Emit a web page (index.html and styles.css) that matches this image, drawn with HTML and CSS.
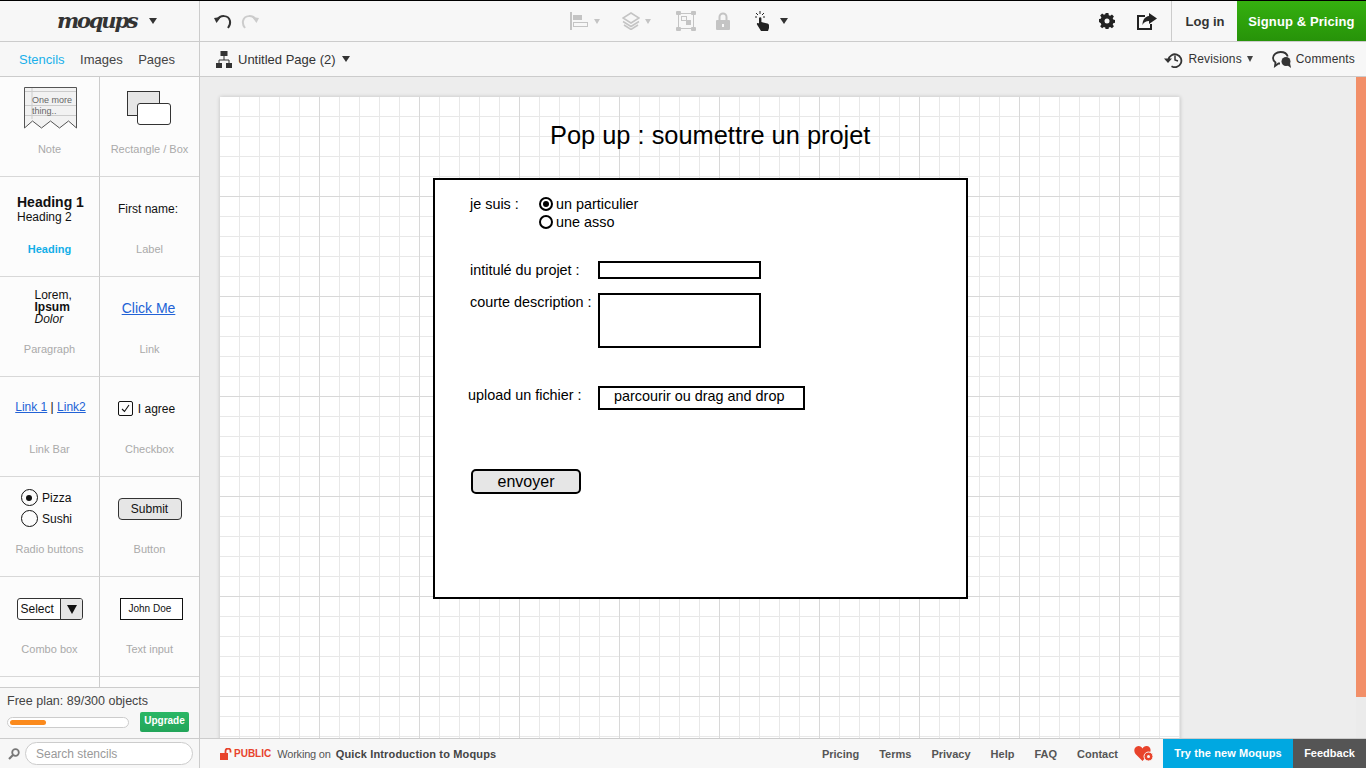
FILE: index.html
```html
<!DOCTYPE html>
<html lang="en">
<head>
  <meta charset="UTF-8" />
  <title>Moqups</title>
  <link rel="stylesheet" href="styles.css">
</head>
<body>
<header class="toolbar">
  <div class="logo-cell">
    <span class="logo">moqups</span>
    <span class="caret dark"></span>
  </div>
  <div class="tools">
    <div class="history">
      <svg width="18" height="18" viewBox="0 0 18 18"><path d="M3.500 7.500C6 3 14.500 2.500 16 9c.5 2.500-.5 5-2 7" fill="none" stroke="#333" stroke-width="2"/><path d="M0 6l7-1-4.500 6z" fill="#333"/></svg>
      <svg width="18" height="18" viewBox="0 0 18 18"><path d="M14.500 7.500C12 3 3.500 2.500 2 9c-.5 2.500.5 5 2 7" fill="none" stroke="#ccc" stroke-width="2"/><path d="M18 6l-7-1 4.500 6z" fill="#ccc"/></svg>
    </div>
    <div class="middle-tools">
      <div class="tool align">
        <svg width="19" height="18" viewBox="0 0 19 18"><path d="M1 0v18" stroke="#c4c4c4" stroke-width="2"/><rect x="3" y="3" width="9" height="5" fill="#c4c4c4"/><rect x="3.500" y="10.500" width="14" height="4" fill="none" stroke="#c4c4c4"/></svg>
        <span class="caret light"></span>
      </div>
      <div class="tool layers">
        <svg width="18" height="18" viewBox="0 0 18 18"><path d="M9 1l8 5-8 5-8-5z" fill="none" stroke="#c4c4c4" stroke-width="1.500"/><path d="M1 9.500l8 5 8-5M2 13l7 4.500 7-4.500" fill="none" stroke="#c4c4c4" stroke-width="1.500"/></svg>
        <span class="caret light"></span>
      </div>
      <div class="tool frame">
        <svg width="20" height="20" viewBox="0 0 20 20"><rect x="2.500" y="2.500" width="15" height="15" fill="none" stroke="#c4c4c4"/><g fill="#c4c4c4"><rect x="0" y="0" width="5" height="4" rx="1"/><rect x="15" y="0" width="5" height="4" rx="1"/><rect x="0" y="16" width="5" height="4" rx="1"/><rect x="15" y="16" width="5" height="4" rx="1"/><rect x="10" y="9" width="5" height="5"/></g><rect x="5.500" y="5.500" width="5" height="4" fill="none" stroke="#c4c4c4"/></svg>
      </div>
      <div class="tool lock">
        <svg width="14" height="18" viewBox="0 0 14 18"><path d="M3.500 8V5a3.500 3.500 0 0 1 7 0v3" fill="none" stroke="#c4c4c4" stroke-width="2"/><rect x="0" y="8" width="14" height="10" rx="1" fill="#c4c4c4"/><rect x="6" y="12" width="2" height="3" fill="#f7f7f7"/></svg>
      </div>
      <div class="tool pointer">
        <svg width="16" height="20" viewBox="0 0 16 20"><path d="M4 7.500a1.200 1.200 0 0 1 2.400 0V11l6 1.500c1 .3 1.600 1 1.600 2V17l-1 3H6l-4-6.500c-.6-1.200.8-2 1.700-1.200L4 13z" fill="#222"/><path d="M5 0v3M1 2l2 2M9 2L7 4M0 6h2M8 6h2" stroke="#222" fill="none"/></svg>
        <span class="caret dark"></span>
      </div>
    </div>
    <div class="side-tools">
      <svg width="16" height="16" viewBox="0 0 16 16"><path d="M6.500 0h3l.4 2.300 1.500.6L13.300 1.600l2.100 2.100-1.300 1.900.6 1.500 2.300.4v3l-2.300.4-.6 1.500 1.300 1.900-2.100 2.100-1.900-1.300-1.500.6-.4 2.300h-3l-.4-2.300-1.500-.6-1.900 1.300-2.100-2.100 1.300-1.900-.6-1.500L-1 9.500v-3l2.300-.4.6-1.500L.6 2.700 2.700.6l1.900 1.300 1.500-.6z" fill="#222" transform="translate(.6 0) scale(.93)"/><circle cx="8" cy="8" r="2.500" fill="#f7f7f7"/></svg>
      <svg width="20" height="17" viewBox="0 0 20 17"><path d="M8 3H1v13h13v-5" fill="none" stroke="#222" stroke-width="2"/><path d="M12 0l8 5.500-8 5.500V8C9 8 7 9 5.500 12 5.500 7 8 3.500 12 3z" fill="#222"/></svg>
    </div>
    <a class="login">Log in</a>
    <a class="signup">Signup &amp; Pricing</a>
  </div>
</header>

<nav class="subbar">
  <div class="tabs">
    <span class="tab active">Stencils</span>
    <span class="tab">Images</span>
    <span class="tab">Pages</span>
  </div>
  <div class="page-bar">
    <div class="page-name">
      <svg width="16" height="17" viewBox="0 0 16 17"><g fill="#333"><rect x="4.500" y="0" width="7" height="5"/><rect x="0" y="12" width="6" height="5"/><rect x="10" y="12" width="6" height="5"/></g><path d="M8 5v4M3 12V9h10v3" fill="none" stroke="#333"/></svg>
      <span>Untitled Page (2)</span>
      <span class="caret dark"></span>
    </div>
    <div class="page-actions">
      <svg class="revisions-icon" width="19" height="17" viewBox="0 0 19 17"><path d="M4.500 8.500a6.500 6.500 0 1 1 3 6.800" fill="none" stroke="#333" stroke-width="1.800"/><path d="M0 7.500h8l-4 4.500z" fill="#333"/><path d="M11 4.500V9l3 1" fill="none" stroke="#333" stroke-width="1.500"/></svg>
      <span>Revisions</span>
      <span class="caret small"></span>
      <svg class="comments-icon" width="20" height="17" viewBox="0 0 20 17"><path d="M8 12.500H6.500L3 15l.5-3.500C1.500 10 1 8.500 1 7c0-3.500 3.500-6 7.500-6 3.500 0 6.500 1.800 7.200 4.500" fill="none" stroke="#333" stroke-width="1.800"/><circle cx="14" cy="10.500" r="4.500" fill="#333"/><path d="M15 14l4 3-1-5z" fill="#333"/></svg>
      <span>Comments</span>
    </div>
  </div>
</nav>

<div class="workspace">
  <aside class="sidebar">
    <div class="stencils">
      <div class="stencil">
        <div class="preview">
          <div class="note-icon">
            <svg width="53" height="42" viewBox="0 0 53 42"><path d="M.5 41V.5h52V41l-8-7-9 7-9-7-9 7-9-7z" fill="#f2f2f2" stroke="#555"/><path d="M1 4.500h51M1 18.500h51M1 28.500h51M8 1v31" stroke="#ccc" fill="none"/></svg>
            <span class="note-text">One more thing..</span>
          </div>
        </div>
        <span class="stencil-name">Note</span>
      </div>
      <div class="stencil">
        <div class="preview">
          <div class="rect-icon"><div class="rect-back"></div><div class="rect-front"></div></div>
        </div>
        <span class="stencil-name">Rectangle / Box</span>
      </div>
      <div class="stencil">
        <div class="preview">
          <div class="headings">
            <div class="h1">Heading 1</div>
            <div class="h2">Heading 2</div>
          </div>
        </div>
        <span class="stencil-name selected">Heading</span>
      </div>
      <div class="stencil">
        <div class="preview"><span class="sample first-name">First name:</span></div>
        <span class="stencil-name">Label</span>
      </div>
      <div class="stencil">
        <div class="preview">
          <div class="paragraph"><div>Lorem,</div><b>Ipsum</b><div><i>Dolor</i></div></div>
        </div>
        <span class="stencil-name">Paragraph</span>
      </div>
      <div class="stencil">
        <div class="preview"><a class="click-me">Click Me</a></div>
        <span class="stencil-name">Link</span>
      </div>
      <div class="stencil">
        <div class="preview"><div class="sample link-bar"><a>Link 1</a> | <a>Link2</a></div></div>
        <span class="stencil-name">Link Bar</span>
      </div>
      <div class="stencil">
        <div class="preview">
          <div class="check-row">
            <span class="check-box"><svg width="11" height="11" viewBox="0 0 11 11"><path d="M2 6l2.500 2.500L9 2" fill="none" stroke="#111" stroke-width="1.100"/></svg></span>
            <span class="sample">I agree</span>
          </div>
        </div>
        <span class="stencil-name">Checkbox</span>
      </div>
      <div class="stencil">
        <div class="preview">
          <div class="radios">
            <div class="radio-row"><span class="radio on"></span><span class="sample">Pizza</span></div>
            <div class="radio-row"><span class="radio"></span><span class="sample">Sushi</span></div>
          </div>
        </div>
        <span class="stencil-name">Radio buttons</span>
      </div>
      <div class="stencil">
        <div class="preview"><div class="submit">Submit</div></div>
        <span class="stencil-name">Button</span>
      </div>
      <div class="stencil">
        <div class="preview">
          <div class="combo"><span class="combo-value">Select</span><span class="combo-arrow"></span></div>
        </div>
        <span class="stencil-name">Combo box</span>
      </div>
      <div class="stencil">
        <div class="preview"><div class="text-input">John Doe</div></div>
        <span class="stencil-name">Text input</span>
      </div>
      <div class="stencil cut"></div>
      <div class="stencil cut"></div>
    </div>
    <div class="plan">
      <div class="plan-text">Free plan: 89/300 objects</div>
      <div class="plan-row">
        <div class="progress"><div class="progress-fill"></div></div>
        <a class="upgrade">Upgrade</a>
      </div>
    </div>
    <div class="search">
      <svg width="12" height="12" viewBox="0 0 12 12"><circle cx="7.500" cy="4.500" r="3.300" fill="none" stroke="#777" stroke-width="1.800"/><path d="M5 7l-4 4" stroke="#777" stroke-width="2.200"/></svg>
      <div class="search-box">Search stencils</div>
    </div>
  </aside>

  <div class="right-column">
    <div class="canvas-row">
      <main class="canvas">
        <div class="page">
          <div class="shape title">Pop up : soumettre un projet</div>
          <div class="shape frame-box"></div>
          <div class="shape lbl lbl-suis">je suis :</div>
          <div class="shape radio-opt opt-one"><span class="mock-radio on"></span>un particulier</div>
          <div class="shape radio-opt opt-two"><span class="mock-radio"></span>une asso</div>
          <div class="shape lbl lbl-title">intitulé du projet :</div>
          <div class="shape field field-title"></div>
          <div class="shape lbl lbl-desc">courte description :</div>
          <div class="shape field field-desc"></div>
          <div class="shape lbl lbl-upload">upload un fichier :</div>
          <div class="shape field field-upload">parcourir ou drag and drop</div>
          <div class="shape send">envoyer</div>
        </div>
      </main>
      <div class="scrollbar"><div class="scroll-thumb"></div></div>
    </div>

    <footer class="footer">
      <div class="status">
        <svg width="14" height="12" viewBox="0 0 14 12"><rect x="0" y="5" width="8" height="7" fill="#e8432b"/><path d="M5.500 5V3a2.500 2.500 0 0 1 5 0v1.500" fill="none" stroke="#e8432b" stroke-width="1.800"/></svg>
        <span class="public">PUBLIC</span>
        <span class="working">Working on</span>
        <b>Quick Introduction to Moqups</b>
      </div>
      <div class="footer-links">
        <a>Pricing</a>
        <a>Terms</a>
        <a>Privacy</a>
        <a>Help</a>
        <a>FAQ</a>
        <a>Contact</a>
        <svg class="heart" width="20" height="17" viewBox="0 0 20 17"><path d="M8.500 16L1.500 9C-1 6 .5 1 4.500 1c2 0 3.200 1 4 2.500C9.300 2 10.500 1 12.500 1c3.500 0 5 3.500 3.500 6.500z" fill="#e8432b"/><circle cx="14.500" cy="11.500" r="4.500" fill="#e8432b" stroke="#f7f7f7"/><circle cx="14.500" cy="11.500" r="1.500" fill="#f7f7f7"/></svg>
      </div>
      <a class="try-new">Try the new Moqups</a>
      <a class="feedback">Feedback</a>
    </footer>
  </div>
</div>
</body>
</html>
```

FILE: styles.css
```css
* {
  box-sizing: border-box;
}
html, body {
  height: 100%;
}
body {
  margin: 0;
  width: 1366px;
  height: 768px;
  overflow: hidden;
  display: flex;
  flex-direction: column;
  font-family: 'Liberation Sans', Arial, sans-serif;
  color: #333;
  background: #f7f7f7;
}
svg {
  display: block;
  flex: none;
}

/* carets */
.caret {
  display: block;
  width: 0;
  height: 0;
  border-left: 4px solid transparent;
  border-right: 4px solid transparent;
  border-top: 6px solid #333;
}
.caret.light {
  border-left-width: 3.500px;
  border-right-width: 3.500px;
  border-top: 5px solid #c4c4c4;
}
.caret.small {
  border-left-width: 3.500px;
  border-right-width: 3.500px;
  border-top: 6px solid #444;
}

/* top toolbar */
.toolbar {
  flex: none;
  height: 42px;
  display: flex;
  border-top: 1px solid #000;
  border-bottom: 1px solid #ccc;
  background: #f7f7f7;
}
.logo-cell {
  flex: none;
  width: 200px;
  padding-left: 57px;
  border-right: 1px solid #ccc;
  display: flex;
  align-items: center;
  gap: 11px;
}
.logo {
  width: 81px;
  font-family: 'DejaVu Serif', serif;
  font-size: 21px;
  font-weight: bold;
  font-style: italic;
  letter-spacing: -2.200px;
  line-height: 22px;
  color: #333;
}
.tools {
  flex: 1;
  display: flex;
  align-items: center;
}
.history {
  display: flex;
  gap: 9px;
  margin-left: 14px;
}
.middle-tools {
  display: flex;
  align-items: center;
  margin-left: 311px;
}
.tool {
  display: flex;
  align-items: center;
  gap: 5px;
}
.align {
  width: 52px;
}
.layers {
  width: 54px;
}
.frame {
  width: 40px;
}
.lock {
  width: 39px;
}
.pointer {
  gap: 9px;
}
.side-tools {
  display: flex;
  align-items: center;
  gap: 22px;
  margin-left: 311px;
  width: 73px;
  height: 100%;
  border-right: 1px solid #ccc;
}
.login {
  width: 65px;
  padding-left: 1px;
  text-align: center;
  font-size: 13px;
  font-weight: bold;
  color: #333;
}
.signup {
  width: 129px;
  height: 100%;
  display: flex;
  align-items: center;
  justify-content: center;
  font-size: 13px;
  font-weight: bold;
  letter-spacing: .1px;
  color: #fff;
  background: linear-gradient(#35b00f, #279309);
}

/* second bar */
.subbar {
  flex: none;
  height: 35px;
  display: flex;
  border-bottom: 1px solid #ccc;
  background: #f7f7f7;
}
.tabs {
  flex: none;
  width: 200px;
  border-right: 1px solid #ccc;
  padding-left: 19px;
  display: flex;
  align-items: center;
  gap: 15.500px;
  font-size: 13px;
}
.tab {
  color: #444;
}
.tab.active {
  color: #1ab0ea;
}
.page-bar {
  flex: 1;
  display: flex;
  align-items: center;
  justify-content: space-between;
  padding: 0 11px 0 16px;
}
.page-name {
  display: flex;
  align-items: center;
  gap: 6px;
  font-size: 13px;
}
.page-actions {
  display: flex;
  align-items: center;
  font-size: 12px;
  letter-spacing: .15px;
}
.revisions-icon {
  margin-right: 5px;
}
.page-actions .caret {
  margin: 0 19px 0 5px;
}
.comments-icon {
  margin-right: 4px;
}

/* main area */
.workspace {
  flex: 1;
  min-height: 0;
  display: flex;
}
.sidebar {
  width: 200px;
  flex: none;
  display: flex;
  flex-direction: column;
  border-right: 1px solid #ccc;
  background: #fcfcfc;
}
.stencils {
  flex: 1;
  min-height: 0;
  overflow: hidden;
  display: grid;
  grid-template-columns: 100px 99px;
  grid-auto-rows: 100px;
}
.stencil {
  display: flex;
  flex-direction: column;
  align-items: center;
  border-bottom: 1px solid #d8d8d8;
}
.stencil:nth-child(odd) {
  border-right: 1px solid #ccc;
}
.stencil.cut {
  height: 10px;
  border-bottom: none;
}
.preview {
  height: 62px;
  width: 100%;
  margin-bottom: 4px;
  display: flex;
  align-items: center;
  justify-content: center;
}
.stencil-name {
  font-size: 11px;
  line-height: 13px;
  color: #aaa;
}
.stencil-name.selected {
  color: #12aee8;
  font-weight: bold;
}
.sample {
  font-size: 12px;
  color: #111;
}
.first-name {
  margin: 2px 3px 0 0;
}
.note-icon {
  position: relative;
  width: 53px;
  height: 42px;
  margin-left: 2px;
}
.note-text {
  position: absolute;
  left: 8px;
  top: 8px;
  width: 44px;
  font-size: 9px;
  line-height: 11px;
  color: #666;
}
.rect-icon {
  position: relative;
  width: 44px;
  height: 34px;
  margin-right: 2px;
}
.rect-back {
  width: 33px;
  height: 25px;
  background: #e6e6e6;
  border: 1px solid #333;
}
.rect-front {
  position: absolute;
  right: 0;
  bottom: 0;
  width: 34px;
  height: 22px;
  background: #fff;
  border: 1px solid #333;
  border-radius: 3px;
}
.headings {
  width: 67px;
  color: #111;
  margin: 4px 0 0 2px;
}
.h1 {
  font-size: 14px;
  font-weight: bold;
  line-height: 15px;
}
.h2 {
  font-size: 12px;
  line-height: 15px;
}
.paragraph {
  width: 38px;
  margin: -2px 0 0 8px;
  font-size: 12px;
  line-height: 12px;
  color: #111;
}
.click-me {
  margin-right: 2px;
  font-size: 14px;
  color: #2262d6;
  text-decoration: underline;
}
.link-bar {
  margin: 0 0 2px 2px;
}
.link-bar a {
  color: #2262d6;
  text-decoration: underline;
}
.check-row {
  display: flex;
  align-items: center;
  gap: 5px;
  margin-right: 6px;
}
.check-row .sample {
  margin-top: 2px;
}
.check-box {
  width: 15px;
  height: 15px;
  border: 1px solid #111;
  border-radius: 2px;
  display: flex;
  align-items: center;
  justify-content: center;
}
.radios {
  display: flex;
  flex-direction: column;
  gap: 4px;
  margin-right: 6px;
}
.radio-row {
  display: flex;
  align-items: center;
  gap: 4px;
}
.radio {
  width: 17px;
  height: 17px;
  border: 1px solid #111;
  border-radius: 50%;
  display: flex;
  align-items: center;
  justify-content: center;
}
.radio.on::after {
  content: "";
  width: 6px;
  height: 6px;
  border-radius: 50%;
  background: #111;
}
.submit {
  width: 64px;
  height: 22px;
  margin-top: 2px;
  border: 1px solid #333;
  border-radius: 4px;
  background: #e6e6e6;
  text-align: center;
  font-size: 12px;
  line-height: 20px;
  color: #111;
}
.combo {
  width: 66px;
  height: 22px;
  margin-top: 2px;
  display: flex;
  border: 1px solid #333;
  border-radius: 3px;
  background: #fff;
  overflow: hidden;
}
.combo-value {
  width: 42px;
  padding-left: 3px;
  font-size: 12px;
  line-height: 20px;
  color: #111;
}
.combo-arrow {
  flex: 1;
  background: #e6e6e6;
  border-left: 1px solid #333;
  position: relative;
}
.combo-arrow::after {
  content: "";
  position: absolute;
  left: 6px;
  top: 6px;
  border-left: 5px solid transparent;
  border-right: 5px solid transparent;
  border-top: 9px solid #111;
}
.text-input {
  width: 63px;
  height: 22px;
  margin: 2px 0 0 3px;
  border: 1px solid #111;
  background: #fff;
  padding-left: 8px;
  font-size: 10px;
  line-height: 20px;
  color: #111;
}
.plan {
  flex: none;
  height: 52px;
  padding: 6px 10px 0 7px;
  border-top: 1px solid #ccc;
  border-bottom: 1px solid #ccc;
  background: #f7f7f7;
}
.plan-text {
  font-size: 12.500px;
  line-height: 14px;
  color: #444;
}
.plan-row {
  display: flex;
  align-items: center;
  justify-content: space-between;
  margin-top: 4px;
}
.progress {
  width: 122px;
  height: 11px;
  padding: 2px;
  border: 1px solid #ccc;
  border-radius: 6px;
  background: #fff;
}
.progress-fill {
  width: 36px;
  height: 100%;
  border-radius: 3px;
  background: #fb8a1c;
}
.upgrade {
  width: 49px;
  height: 20px;
  border-radius: 2px;
  background: linear-gradient(#2ab765, #23a55a);
  color: #fff;
  text-align: center;
  font-size: 10px;
  font-weight: bold;
  line-height: 17px;
}
.search {
  flex: none;
  height: 29px;
  display: flex;
  align-items: center;
  gap: 5px;
  padding-left: 8px;
  background: #f7f7f7;
}
.search-box {
  width: 168px;
  height: 23px;
  padding-left: 10px;
  border: 1px solid #ccc;
  border-radius: 12px;
  background: #fff;
  font-size: 12px;
  line-height: 22px;
  color: #999;
}

/* canvas */
.right-column {
  flex: 1;
  min-width: 0;
  display: flex;
  flex-direction: column;
}
.canvas-row {
  flex: 1;
  min-height: 0;
  display: flex;
}
.canvas {
  flex: 1;
  min-width: 0;
  padding: 20px 0 0 20px;
  overflow: hidden;
  background: #ededed;
}
.page {
  position: relative;
  width: 960px;
  height: 700px;
  background-color: #fff;
  background-image:
    linear-gradient(#d8d8d8 1px, transparent 1px),
    linear-gradient(90deg, #d8d8d8 1px, transparent 1px),
    linear-gradient(#e8e8e8 1px, transparent 1px),
    linear-gradient(90deg, #e8e8e8 1px, transparent 1px);
  background-size: 100px 100px, 100px 100px, 20px 20px, 20px 20px;
  background-position: 0 99px, 99px 0, 0 19px, 19px 0;
  box-shadow: 0 0 4px rgba(0,0,0,0.2);
}
.scrollbar {
  width: 10px;
  flex: none;
  background: #ebebeb;
}
.scroll-thumb {
  height: 620px;
  background: #f28f68;
}

/* mockup shapes, placed on the page like in the editor */
.shape {
  position: absolute;
  color: #000;
  white-space: nowrap;
}
.title {
  left: 330px;
  top: 23px;
  font-size: 25.400px;
  line-height: 30px;
}
.frame-box {
  left: 213px;
  top: 81px;
  width: 535px;
  height: 421px;
  border: 2px solid #000;
  background: #fff;
}
.lbl, .radio-opt, .field-upload {
  font-size: 14.400px;
  line-height: 16px;
}
.lbl-suis {
  left: 250px;
  top: 99px;
}
.lbl-title {
  left: 250px;
  top: 165px;
}
.lbl-desc {
  left: 250px;
  top: 197px;
}
.lbl-upload {
  left: 248px;
  top: 290px;
}
.radio-opt {
  display: flex;
  align-items: center;
  gap: 3px;
}
.opt-one {
  left: 319px;
  top: 99px;
}
.opt-two {
  left: 319px;
  top: 117px;
}
.mock-radio {
  width: 14px;
  height: 14px;
  border: 2px solid #000;
  border-radius: 50%;
  display: flex;
  align-items: center;
  justify-content: center;
}
.mock-radio.on::after {
  content: "";
  width: 6px;
  height: 6px;
  border-radius: 50%;
  background: #000;
}
.field {
  border: 2px solid #000;
  background: #fff;
}
.field-title {
  left: 378px;
  top: 164px;
  width: 163px;
  height: 18px;
}
.field-desc {
  left: 378px;
  top: 196px;
  width: 163px;
  height: 55px;
}
.field-upload {
  left: 378px;
  top: 289px;
  width: 207px;
  height: 24px;
  padding-left: 14px;
}
.send {
  left: 251px;
  top: 372px;
  width: 110px;
  height: 25px;
  border: 2px solid #000;
  border-radius: 5px;
  background: #e6e6e6;
  text-align: center;
  font-size: 16px;
  line-height: 21px;
}

/* footer */
.footer {
  flex: none;
  height: 30px;
  display: flex;
  align-items: stretch;
  border-top: 1px solid #ccc;
  background: #f7f7f7;
  font-size: 11px;
}
.status {
  width: 620px;
  padding-left: 20px;
  display: flex;
  align-items: center;
  gap: 4px;
  color: #555;
}
.status b {
  margin-left: 1px;
  letter-spacing: .15px;
  color: #444;
}
.public {
  margin-left: -4px;
  font-size: 10px;
  font-weight: bold;
  color: #e8432b;
}
.working {
  margin-left: 2px;
  letter-spacing: -.2px;
}
.footer-links {
  flex: 1;
  display: flex;
  align-items: center;
  justify-content: flex-end;
  gap: 20px;
  padding-right: 9px;
  font-weight: bold;
  color: #555;
}
.heart {
  margin-left: -4px;
}
.try-new {
  width: 130px;
  text-align: center;
  line-height: 29px;
  font-weight: bold;
  letter-spacing: .1px;
  color: #fff;
  background: #00a8e1;
}
.feedback {
  width: 73px;
  text-align: center;
  line-height: 29px;
  font-weight: bold;
  color: #fff;
  background: #555;
}
```
